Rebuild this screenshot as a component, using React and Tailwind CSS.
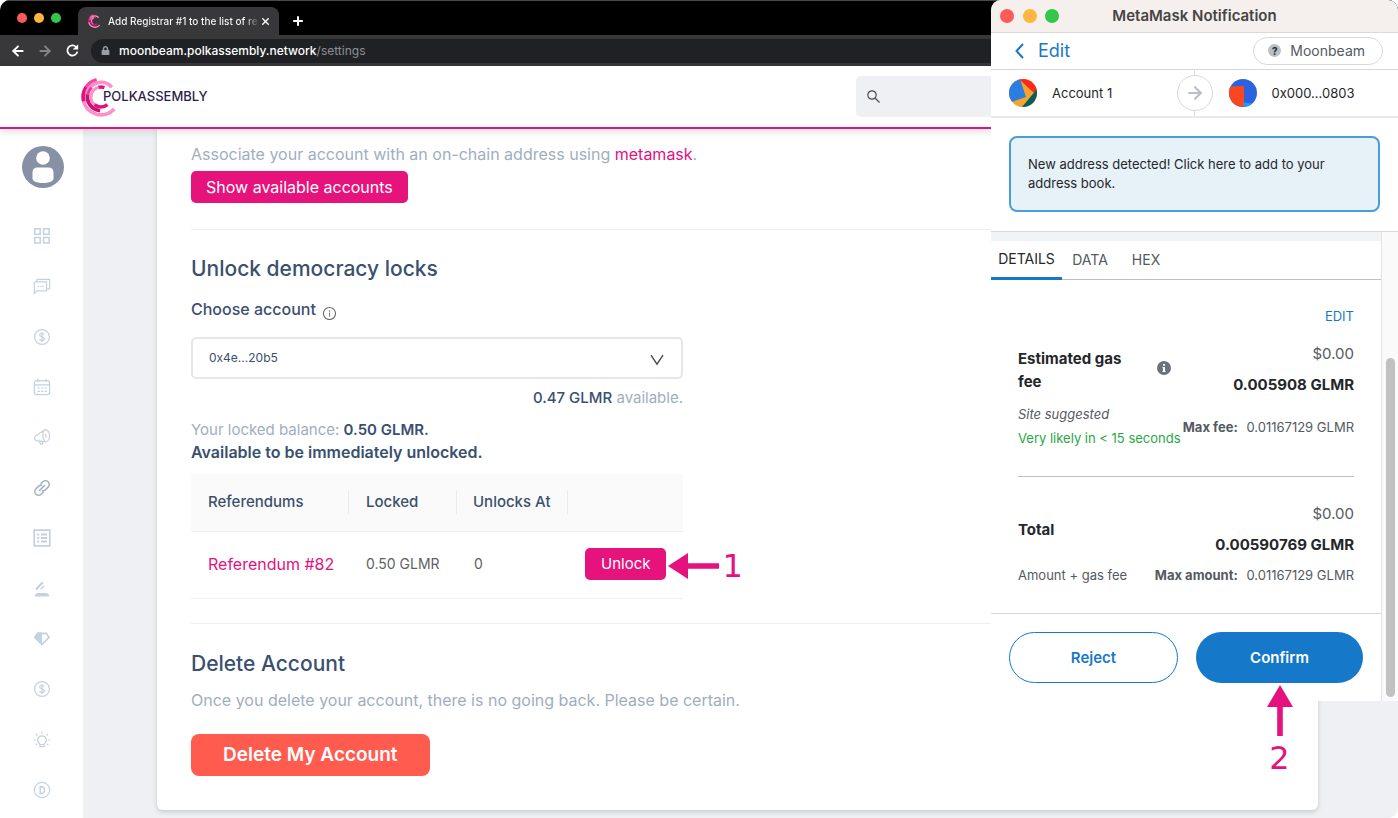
import React from "react";
import { AiOutlineInfoCircle } from "react-icons/ai";
import { FaLock } from "react-icons/fa";
import { ArrowLeft, ArrowRight, Plus, X } from "lucide-react";

function arcPath(c, r, from, to) {
  const rad = (a) => (a * Math.PI) / 180;
  const x1 = c + r * Math.cos(rad(from));
  const y1 = c + r * Math.sin(rad(from));
  const x2 = c + r * Math.cos(rad(to));
  const y2 = c + r * Math.sin(rad(to));
  return `M${x1} ${y1}A${r} ${r} 0 ${to - from > 180 ? 1 : 0} 1 ${x2} ${y2}`;
}

const LOGO_ARCS = [
  { r: 17.8, from: 42, to: 172, color: "#ff8fcb", w: 3.8 },
  { r: 17.8, from: 166, to: 215, color: "#e5117f", w: 3.8 },
  { r: 17.8, from: 215, to: 256, color: "#f4479f", w: 3.8 },
  { r: 14.6, from: 190, to: 318, color: "#ff8fcb", w: 3.6 },
  { r: 13.6, from: 94, to: 192, color: "#c9146f", w: 3.8 },
  { r: 13.4, from: 188, to: 225, color: "#ec3a96", w: 3 },
  { r: 10, from: 128, to: 255, color: "#ff8fcb", w: 3 },
  { r: 10, from: 255, to: 290, color: "#e5117f", w: 3.4 },
  { r: 10, from: 50, to: 130, color: "#e5117f", w: 3.4 },
];

function Logo({ className }) {
  return (
    <svg viewBox="0 0 40 40" className={className} fill="none" aria-hidden="true">
      {LOGO_ARCS.map((a, i) => (
        <path key={i} d={arcPath(20, a.r, a.from, a.to)} stroke={a.color} strokeWidth={a.w} />
      ))}
    </svg>
  );
}

function Lights({ className }) {
  return (
    <div className={className}>
      <span className="size-full rounded-full bg-[#fc5b57]" />
      <span className="size-full rounded-full bg-[#fdb73e]" />
      <span className="size-full rounded-full bg-[#34c648]" />
    </div>
  );
}

function BrowserChrome() {
  return (
    <div className="text-white">
      <div className="flex h-[35px] items-end border-t border-[#4a4a4a] bg-black">
        <Lights className="mb-3 ml-[17px] grid w-[44px] grid-cols-[10px_10px_10px] justify-between self-end *:h-[10px]" />
        <div className="ml-[17px] flex h-7 w-[201px] items-center rounded-t-lg bg-[#38383a] pr-2 pl-[10px]">
          <Logo className="size-[14px] shrink-0" />
          <span className="ml-1.5 flex-1 bg-linear-to-r from-white from-90% to-[#38383a] bg-clip-text text-[10px] leading-4 font-medium whitespace-nowrap text-transparent">
            Add Registrar #1 to the list of re
          </span>
          <button aria-label="Close tab">
            <X className="size-[11px]" strokeWidth={3} />
          </button>
        </div>
        <button aria-label="New tab" className="mb-[7px] ml-3">
          <Plus className="size-[14px]" strokeWidth={3.4} />
        </button>
      </div>
      <div className="flex h-[31px] items-center bg-[#38383a]">
        <button aria-label="Back" className="ml-[10px]">
          <ArrowLeft className="size-4" strokeWidth={2.8} />
        </button>
        <button aria-label="Forward" className="ml-[11px] text-[#858585]">
          <ArrowRight className="size-4" strokeWidth={2.8} />
        </button>
        <button aria-label="Reload" className="ml-[12px]">
          <svg viewBox="0 0 16 16" className="size-[15px]" fill="none" stroke="currentColor" strokeWidth="1.9" aria-hidden="true">
            <path d="M13.2 9.2A5.4 5.4 0 1 1 11.9 4.3" />
            <path d="M14 1.2V7H8.2z" fill="currentColor" stroke="none" />
          </svg>
        </button>
        <div className="ml-[11px] flex h-6 flex-1 items-center rounded-l-full bg-[#202124] pl-[10px] text-xs">
          <FaLock className="size-[9px] text-[#9aa0a6]" />
          <span className="ml-[9px] font-medium">
            moonbeam.polkassembly.network
            <span className="font-normal text-[#8d8f93]">/settings</span>
          </span>
        </div>
      </div>
    </div>
  );
}

const coin = (
  <>
    <circle cx="9" cy="9" r="7.4" />
    <path d="M11.3 6.9C11 6 10.2 5.5 9 5.5c-1.400 0-2.300.6-2.300 1.600C6.700 9.500 11.400 8.200 11.400 10.800c0 1-.9 1.700-2.400 1.700-1.300 0-2.200-.6-2.400-1.500M9 4v10" />
  </>
);

const NAV = [
  {
    label: "Overview",
    art: (
      <g strokeWidth="1.5">
        <path d="M1.700 1.700h5.500v5.500H1.700zM10.600 1.700h5.500v5.500h-5.500zM1.700 10.600h5.500v5.500H1.700zM10.600 10.600h5.500v5.500h-5.500z" />
      </g>
    ),
  },
  {
    label: "Discussions",
    art: (
      <>
        <path d="M2 4.800h11.500v9H4.200L1.400 16.300V5.400zM4 4.800V2.300h12.600v9.600h-3" />
        <path d="M4.800 9.400h6" strokeDasharray="1.300 1" />
      </>
    ),
  },
  { label: "Treasury", art: coin },
  {
    label: "Calendar",
    art: (
      <>
        <rect x="1.400" y="2.600" width="15.200" height="14" rx="2.400" />
        <path d="M1.400 6.800h15.200M5 .8v3.400M13 .8v3.400" />
        <path d="M4.500 10h9.500M4.500 13.300h9.500" strokeDasharray="2.300 1.300" />
      </>
    ),
  },
  {
    label: "Announcements",
    art: (
      <>
        <path d="M11 2.200 2.200 8.300c-1.200 1.200-.6 4 .9 4.300l9.700 1.200M11 2.200c2-1.800 5.500 1 5.600 5.300.1 3.500-1.700 6.300-3.800 6.300C10 12.900 8.700 5.500 11 2.200zM12.200 6.200c1 .4 1.300 2.700.5 3.300M6.300 13l1.300 3.200h2v-2.700" />
      </>
    ),
  },
  {
    label: "Links",
    active: true,
    art: (
      <g strokeWidth="1.500" strokeLinecap="round">
        <path d="M8 4.600 9.800 2.800a3.700 3.700 0 0 1 5.300 5.300l-2.600 2.600c-.8.8-2 1.100-3 .9M10 13.400l-1.800 1.800a3.700 3.700 0 0 1-5.300-5.300l2.600-2.600c.8-.8 2-1.100 3-.9M6.500 11.500l5-5" />
      </g>
    ),
  },
  {
    label: "Referenda",
    art: (
      <>
        <path d="M1.200 1.200h15.600v15.600H1.200z" strokeWidth="1.700" />
        <path d="M4.200 5.500h2M8 5.500h6M4.200 9h2M8 9h6M4.200 12.500h2M8 12.500h6" strokeWidth="1.800" />
      </>
    ),
  },
  {
    label: "Proposals",
    art: (
      <>
        <path d="M3 9.500 9.800 2.300" strokeWidth="2.200" />
        <path d="M7.600 9.300l3.600-3.600" strokeWidth="1.300" />
        <path d="M1.800 16.600c0-2.500 1.200-3.700 3.200-3.700h8c2 0 3.200 1.200 3.200 3.700z" fill="currentColor" stroke="none" />
      </>
    ),
  },
  {
    label: "Tech committee",
    art: (
      <>
        <path d="M9 2.600H4.400L1 7.400l8 8z" fill="currentColor" stroke="none" />
        <path d="M4.700 3.400h8.600l2.800 4L9 14.500 1.900 7.400z" strokeWidth="1.600" />
      </>
    ),
  },
  { label: "Bounties", art: coin },
  {
    label: "Tips",
    art: (
      <>
        <path d="M6.900 13.200C4.600 11 4.300 9.500 4.800 7.900 5.500 6 7 4.900 9 4.900s3.600 1.100 4.200 3c.5 1.600.1 3.100-2.100 5.300v2.400H6.900zM6.900 13.500h4.200M9 .8v2M.8 9h2M15.200 9h2M3 3l1.500 1.500M15 3l-1.500 1.500M2.800 14l1.400-1.200M15.200 14l-1.400-1.200" />
      </>
    ),
  },
  {
    label: "Dashboard",
    art: (
      <>
        <circle cx="9" cy="9" r="7.700" />
        <path d="M7.200 5.400v7.200c3 0 4.300-1.600 4.300-3.600s-1.300-3.600-4.300-3.600z" strokeWidth="1.500" />
      </>
    ),
  },
];

function Sidebar() {
  return (
    <aside className="flex w-[83px] shrink-0 flex-col bg-white pt-[17px] pb-[19px]">
      <a href="#profile" aria-label="Profile" className="ml-[22px] self-start">
        <svg viewBox="0 0 42 42" className="size-[42px]" aria-hidden="true">
          <circle cx="21" cy="21" r="21" fill="#8791a5" />
          <circle cx="21" cy="12" r="6.800" fill="#fff" />
          <path d="M10.500 26.500c0-3.200 1.800-5 5-5h11c3.200 0 5 1.800 5 5v6c0 3-5.200 4.500-10.500 4.500s-10.500-1.500-10.500-4.500z" fill="#fff" />
        </svg>
      </a>
      <nav className="mt-[39px] flex flex-1 flex-col items-center justify-between">
        {NAV.map((n) => (
          <a key={n.label} href="#nav" aria-label={n.label} className={n.active ? "text-[#a0b0c7]" : "text-[#c3d1e3]"}>
            <svg viewBox="0 0 18 18" className="size-[18px]" fill="none" stroke="currentColor" strokeWidth="1.200" aria-hidden="true">
              {n.art}
            </svg>
          </a>
        ))}
      </nav>
    </aside>
  );
}

function Settings() {
  return (
    <main className="flex-1 bg-[#eff0f4] pr-20 pb-2 pl-[74px]">
      <div className="h-full rounded-b-md bg-white px-[34px] pt-[13px] pb-[34px] text-base leading-6 text-[#a0aec0] shadow-[0_2px_5px_rgba(0,0,0,0.16)]">
        <p>
          Associate your account with an on-chain address using{" "}
          <a href="#metamask" className="text-[#e5117f]">metamask</a>.
        </p>
        <button className="mt-[5px] block h-8 rounded-[5px] bg-[#e6137d] px-[15px] text-white">Show available accounts</button>
        <hr className="mt-[26px] border-[#efeff1]" />

        <h2 className="mt-[25px] text-[21px] leading-7 font-medium text-[#3a506f]">Unlock democracy locks</h2>
        <div className="w-[492px]">
          <div className="mt-[14px] flex items-center text-[#3a506f]">
            <label htmlFor="account" className="font-medium">Choose account</label>
            <AiOutlineInfoCircle className="mt-2 ml-[6px] size-[15px] text-[#6b6b6b]" />
          </div>
          <div className="relative mt-4">
            <select id="account" className="block h-[42px] w-full appearance-none rounded-[5px] border-2 border-[#e6e7ec] bg-white px-4 text-xs text-[#3a506f]">
              <option>0x4e...20b5</option>
            </select>
            <svg viewBox="0 0 14 12" className="pointer-events-none absolute top-[17px] right-[19px] h-3 w-[14px]" fill="none" stroke="#4c4c4c" strokeWidth="1.400" aria-hidden="true">
              <path d="M1 1.200 7 10.200 13 1.200" />
            </svg>
          </div>
          <p className="mt-[7px] text-right text-[15px] leading-6">
            <span className="font-medium text-[#3a506f]">0.47 GLMR</span> available.
          </p>
          <p className="mt-[9px] text-[15px] leading-[22px]">
            Your locked balance: <strong className="font-semibold text-[#3a506f]">0.50 GLMR.</strong>
            <strong className="block text-base leading-[22px] font-semibold text-[#3a506f]">Available to be immediately unlocked.</strong>
          </p>
          <table className="mt-[11px] w-full table-fixed text-left">
            <thead className="bg-[#fafafa] text-[15px] text-[#3a506f]">
              <tr className="h-[57px] border-b border-[#f0f0f0] *:p-0 *:font-medium">
                <th className="w-[158px]"><div className="border-r border-[#ececec] pl-[17px]">Referendums</div></th>
                <th className="w-[108px]"><div className="border-r border-[#ececec] pl-[17px]">Locked</div></th>
                <th className="w-[111px]"><div className="border-r border-[#ececec] pl-4">Unlocks At</div></th>
                <th aria-label="Action" />
              </tr>
            </thead>
            <tbody className="text-sm text-[#5f5f5f]">
              <tr className="h-[67px] border-b border-[#f0f0f0] *:p-0 *:pb-[2px] *:pl-[17px]">
                <td><a href="#82" className="text-base text-[#e5117f]">Referendum #82</a></td>
                <td>0.50 GLMR</td>
                <td>0</td>
                <td>
                  <div className="relative inline-block align-middle">
                    <button className="block h-8 rounded-[5px] bg-[#e6137d] px-4 text-[15px] text-white">Unlock</button>
                    <div className="absolute top-0 left-full ml-[2px] flex h-9 items-center text-[#e5117f]">
                      <svg viewBox="0 0 51 26" className="h-[26px] w-[51px] shrink-0" fill="currentColor" aria-hidden="true">
                        <path d="M0 13 20 0v10.200h31v5.600H20V26z" />
                      </svg>
                      <span className="ml-[3px] font-['DejaVu_Sans',sans-serif] text-[32px] leading-9">1</span>
                    </div>
                  </div>
                </td>
              </tr>
            </tbody>
          </table>
        </div>
        <hr className="mt-6 border-[#efeff1]" />

        <h2 className="mt-[26px] text-[21px] leading-7 font-medium text-[#3a506f]">Delete Account</h2>
        <p className="mt-[10px]">Once you delete your account, there is no going back. Please be certain.</p>
        <button className="mt-[22px] block h-[42px] rounded-lg bg-[#ff5b4f] px-8 text-[19px] font-semibold text-white">Delete My Account</button>
      </div>
    </main>
  );
}

function AccountsBar() {
  return (
    <div className="grid h-12 grid-cols-[1fr_36px_1fr] items-center border-b-2 border-[#e7e9eb] text-[13px] text-[#24272a]">
      <div className="flex items-center gap-[15px] pl-[18px]">
        <svg viewBox="0 0 28 28" className="size-7" aria-hidden="true">
          <clipPath id="avatarA"><circle cx="14" cy="14" r="14" /></clipPath>
          <g clipPath="url(#avatarA)">
            <path d="M0 0h28v28H0z" fill="#f6a42c" />
            <path d="M0 0h11l6 18L0 24z" fill="#2b7de0" />
            <path d="M10 0h18v11l-3 3L12 2z" fill="#fb2a1c" />
            <path d="M28 10v18H13z" fill="#075e5a" />
          </g>
        </svg>
        Account 1
      </div>
      <div className="flex flex-col items-center self-center">
        <span className="h-[5px] w-px bg-[#dadde0]" />
        <span className="flex size-9 items-center justify-center rounded-full border border-[#d6d9dc] bg-white text-[#bbc0c5]">
          <ArrowRight className="size-5" strokeWidth={2.6} />
        </span>
        <span className="h-[5px] w-px bg-[#dadde0]" />
      </div>
      <div className="flex items-center gap-[15px] pl-4">
        <svg viewBox="0 0 28 28" className="size-7" aria-hidden="true">
          <clipPath id="avatarB"><circle cx="14" cy="14" r="14" /></clipPath>
          <g clipPath="url(#avatarB)">
            <path d="M0 0h28v28H0z" fill="#2a62e0" />
            <path d="M0 7.500 15 7v21H0z" fill="#fa4720" />
            <path d="M14.500 23.500 28 25v3H14.500z" fill="#1f9bf5" />
          </g>
        </svg>
        0x000...0803
      </div>
    </div>
  );
}

function WalletWindow() {
  return (
    <section aria-label="MetaMask Notification" className="absolute top-0 right-0 flex w-[407px] flex-col rounded-t-[10px] bg-white text-[13px] leading-5 text-[#535a61]">
      <header className="relative flex h-[33px] items-center justify-center rounded-t-[10px] border-b border-[#dcd8d6] bg-[#f5f0ee]">
        <Lights className="absolute top-[9px] left-[9px] grid w-[59px] grid-cols-[14px_14px_14px] justify-between *:h-[14px]" />
        <h1 className="text-[15px] font-semibold text-[#464443]">MetaMask Notification</h1>
      </header>
      <div className="flex h-[37px] items-center justify-between border-b border-[#d6d9dc] pr-[15px] pb-px pl-6">
        <button className="flex items-center text-lg text-[#1778c9]">
          <svg viewBox="0 0 9 16" className="mr-[14px] h-4 w-[9px]" fill="none" stroke="currentColor" strokeWidth="2" aria-hidden="true">
            <path d="M8 1 1.500 8 8 15" />
          </svg>
          Edit
        </button>
        <div className="flex h-7 items-center gap-[9px] rounded-full border border-[#d6d9dc] pr-[17px] pl-[14px] text-sm">
          <span className="flex size-[13px] items-center justify-center rounded-full bg-[#bbc0c5] text-[10px] leading-none font-bold text-[#24272a]">?</span>
          Moonbeam
        </div>
      </div>
      <AccountsBar />
      <div className="border-b border-[#d6d9dc] px-[18px] pt-[18px] pb-[19px]">
        <button className="block h-[76px] w-full rounded-lg border-2 border-[#4a9cdb] bg-[#e7f1f8] px-[17px] pb-px text-left leading-[19px] text-[#24272a]">
          New address detected! Click here to add to your address book.
        </button>
      </div>
      <div className="flex">
        <div className="flex-1">
          <div className="h-[9px] bg-[#f2f3f4]" />
          <div role="tablist" className="flex h-[39px] border-b border-[#bbc0c5] text-sm">
            <button role="tab" aria-selected="true" className="-mb-px w-[71px] border-b-3 border-[#1778c9] text-[#24272a]">DETAILS</button>
            <button role="tab" aria-selected="false" className="w-[56px]">DATA</button>
            <button role="tab" aria-selected="false" className="w-[56px]">HEX</button>
          </div>
          <div className="px-[27px] pt-[26px] pb-[28px]">
            <div className="text-right">
              <button className="text-[#1778c9]">EDIT</button>
            </div>
            <div className="mt-4 flex justify-between">
              <div className="pt-[5px]">
                <div className="flex items-center">
                  <h3 className="w-[139px] pr-6 text-[15px] leading-[23px] font-bold text-[#24272a]">Estimated gas fee</h3>
                  <svg viewBox="0 0 14 14" className="-mt-1 size-[14px]" aria-hidden="true">
                    <circle cx="7" cy="7" r="7" fill="#6a737d" />
                    <path d="M6 3h2v1.800H6zM5.500 6H8v4h.6v1H5.400v-1H6V7h-.5z" fill="#fff" />
                  </svg>
                </div>
                <p className="mt-[11px] italic">Site suggested</p>
                <p className="mt-1 whitespace-nowrap text-[#28a745]">Very likely in &lt; 15 seconds</p>
              </div>
              <div className="text-right whitespace-nowrap">
                <p className="text-[15px] leading-6">$0.00</p>
                <p className="mt-[7px] text-[15px] leading-6 font-bold text-[#24272a]">0.005908 GLMR</p>
                <p className="mt-5"><strong className="mr-[5px]">Max fee:</strong> 0.01167129 GLMR</p>
              </div>
            </div>
            <hr className="mt-[28px] border-[#bbc0c5]" />
            <div className="mt-[25px] flex justify-between">
              <div className="pt-4">
                <h3 className="text-[15px] leading-6 font-bold text-[#24272a]">Total</h3>
                <p className="mt-[23px]">Amount + gas fee</p>
              </div>
              <div className="text-right whitespace-nowrap">
                <p className="text-[15px] leading-6">$0.00</p>
                <p className="mt-[7px] text-[15px] leading-6 font-bold text-[#24272a]">0.00590769 GLMR</p>
                <p className="mt-2"><strong className="mr-[5px]">Max amount:</strong> 0.01167129 GLMR</p>
              </div>
            </div>
          </div>
          <div className="flex gap-[18px] border-t border-[#d6d9dc] p-[18px] text-[15px] font-semibold">
            <button className="h-[51px] flex-1 rounded-full border border-[#1778c9] text-[#1778c9]">Reject</button>
            <div className="relative flex-1">
              <button className="h-[51px] w-full rounded-full bg-[#1578c8] text-white">Confirm</button>
              <div className="absolute inset-x-0 top-full mt-[2px] flex flex-col items-center text-[#e5117f]">
                <svg viewBox="0 0 26 51" className="h-[51px] w-[26px]" fill="currentColor" aria-hidden="true">
                  <path d="M13 0 26 22H15.800v29h-5.600V22H0z" />
                </svg>
                <span className="mt-1 font-['DejaVu_Sans',sans-serif] text-[32px] leading-9 font-normal">2</span>
              </div>
            </div>
          </div>
        </div>
        <div className="w-[17px] rounded-br-lg border-l border-[#e4e4e4] bg-[#fafafa] pt-[126px] pr-[3px] pb-1 pl-1">
          <div className="h-full rounded-full bg-[#c1c1c1]" />
        </div>
      </div>
    </section>
  );
}

export default function App() {
  return (
    <div className="bg-white font-[Inter,'Liberation_Sans',sans-serif]">
      <div className="relative flex min-h-screen flex-col overflow-hidden rounded-[10px] bg-white">
        <BrowserChrome />
        <header className="z-0 flex h-[63px] items-center justify-between border-b-2 border-[#e5117f] bg-white pr-20 pl-[81px] shadow-[0_2px_8px_rgba(0,0,0,0.14)]">
          <a href="#home" className="flex items-center">
            <Logo className="size-10" />
            <span className="-ml-[18px] text-[13px] font-medium text-[#2d1f4c]">POLKASSEMBLY</span>
          </a>
          <label className="flex h-[41px] w-[462px] items-center rounded-[5px] bg-[#eff0f4] px-[11px]">
            <svg viewBox="0 0 13 13" className="size-[13px]" fill="none" stroke="#4c4c4c" strokeWidth="1.200" aria-hidden="true">
              <circle cx="5" cy="5" r="4.200" />
              <path d="m8 8 4.500 4.500" />
            </svg>
            <input type="search" aria-label="Search" className="ml-2 flex-1 bg-transparent text-sm outline-none" />
          </label>
        </header>
        <div className="flex flex-1">
          <Sidebar />
          <Settings />
        </div>
        <WalletWindow />
      </div>
    </div>
  );
}
